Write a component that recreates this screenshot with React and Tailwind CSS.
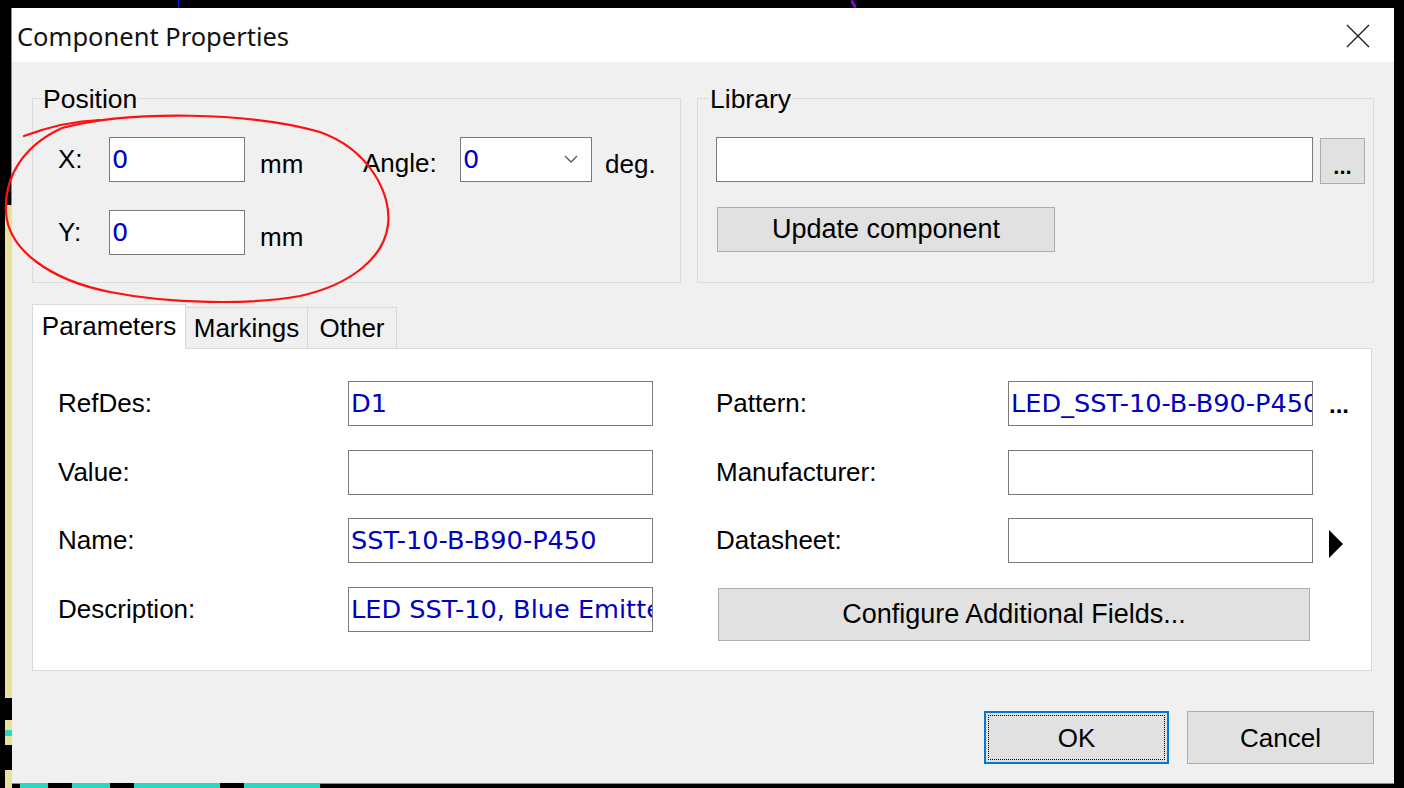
import React from "react";

function TextField({ value = "", w = "w-[305px]" }) {
  return (
    <div
      className={`${w} h-[45px] shrink-0 bg-white border border-[#7a7a7a] flex items-center pl-[2px] overflow-hidden whitespace-nowrap font-['DejaVu_Sans',Verdana,sans-serif] text-[25.6px] text-[#0000c0]`}
    >
      {value}
    </div>
  );
}

function Btn({ children, className = "" }) {
  return (
    <div
      className={`shrink-0 bg-[#e1e1e1] border border-[#adadad] flex items-center justify-center ${className}`}
    >
      {children}
    </div>
  );
}

function FieldRow({ label, value, extra }) {
  return (
    <div className="flex items-center h-[45px]">
      <div className="w-[290px] shrink-0 text-[26px]">{label}</div>
      <TextField value={value} />
      {extra}
    </div>
  );
}

export default function App() {
  return (
    <div className="relative w-[1404px] h-[788px] bg-black overflow-hidden font-['Liberation_Sans',Arial,sans-serif] text-black">
      {/* desktop background bits */}
      <div className="absolute left-[5px] top-[205px] w-[7px] h-[583px] bg-[#e6e29c]" />
      <div className="absolute left-[5px] top-[698px] w-[7px] h-[22px] bg-black" />
      <div className="absolute left-[5px] top-[730px] w-[7px] h-[6px] bg-[#2ad7c0]" />
      <div className="absolute left-[5px] top-[745px] w-[7px] h-[25px] bg-black" />
      <div className="absolute left-[20px] top-[783px] w-[300px] h-[5px] bg-[#2ad7c0]" />
      <div className="absolute left-[48px] top-[783px] w-[24px] h-[5px] bg-black" />
      <div className="absolute left-[110px] top-[783px] w-[24px] h-[5px] bg-black" />
      <div className="absolute left-[220px] top-[783px] w-[24px] h-[5px] bg-black" />
      <div className="absolute left-[178px] top-0 w-[1px] h-[8px] bg-[#1010ff]" />
      <div className="absolute left-[852px] top-0 w-[3px] h-[8px] bg-[#7a10c0] rotate-[-30deg]" />

      {/* dialog window */}
      <div className="ml-[11px] mt-[8px] w-[1383px] h-[776px] flex flex-col border-l border-b border-[#8a8a8a] bg-[#f0f0f0]">
        {/* title bar */}
        <div className="h-[54px] shrink-0 bg-white flex items-center justify-between pl-[6px] pr-[24px]">
          <span className="font-['Noto_Sans','Open_Sans',sans-serif] text-[25.5px] text-[#111] pt-[2px] -ml-px">
            Component Properties
          </span>
          <svg width="24" height="24" viewBox="0 0 24 24" className="mt-[2px]">
            <path d="M1 1 L23 23 M23 1 L1 23" stroke="#222" strokeWidth="1.4" fill="none" />
          </svg>
        </div>

        {/* body */}
        <div className="flex-1 flex flex-col px-[20px]">
          {/* groups */}
          <div className="flex mt-[36px] gap-[16px]">
            {/* Position */}
            <div className="relative w-[649px] h-[185px] border border-[#dcdcdc]">
              <span className="absolute left-[9px] top-[-13px] px-[1px] bg-[#f0f0f0] leading-none text-[26.5px]">
                Position
              </span>
              <div className="flex flex-col gap-[28px] pl-[25px] pt-[38px]">
                <div className="flex items-center h-[45px]">
                  <span className="w-[51px] text-[26px]">X:</span>
                  <TextField value="0" w="w-[136px]" />
                  <span className="ml-[15px] w-[103px] pt-[9px] text-[26px]">mm</span>
                  <span className="w-[97px] pt-[8px] text-[26px]">Angle:</span>
                  <div className="w-[132px] h-[45px] bg-white border border-[#7a7a7a] flex items-center justify-between pl-[2px] pr-[13px] font-['DejaVu_Sans',Verdana,sans-serif] text-[25.6px] text-[#0000c0]">
                    <span>0</span>
                    <svg width="14" height="9" viewBox="0 0 14 9">
                      <path d="M1 1 L7 7 L13 1" stroke="#555" strokeWidth="1.3" fill="none" />
                    </svg>
                  </div>
                  <span className="ml-[13px] pt-[9px] text-[26px]">deg.</span>
                </div>
                <div className="flex items-center h-[45px]">
                  <span className="w-[51px] text-[26px]">Y:</span>
                  <TextField value="0" w="w-[136px]" />
                  <span className="ml-[15px] pt-[9px] text-[26px]">mm</span>
                </div>
              </div>
            </div>

            {/* Library */}
            <div className="relative flex-1 h-[185px] border border-[#dcdcdc]">
              <span className="absolute left-[11px] top-[-13px] px-[1px] bg-[#f0f0f0] leading-none text-[26.5px]">
                Library
              </span>
              <div className="flex flex-col pl-[18px] pt-[38px]">
                <div className="flex items-start">
                  <TextField value="" w="w-[597px]" />
                  <Btn className="ml-[7px] mt-[1px] w-[45px] h-[46px] pt-[10px] text-[22px] font-bold">
                    ...
                  </Btn>
                </div>
                <Btn className="mt-[23px] ml-[1px] w-[338px] h-[45px] text-[27px]">Update component</Btn>
              </div>
            </div>
          </div>

          {/* tabs */}
          <div className="flex items-end h-[44px] mt-[21px]">
            <div className="relative z-10 w-[154px] h-[45px] -mb-px bg-white border border-b-0 border-[#d9d9d9] flex items-center justify-center text-[26px] pb-[2px]">
              Parameters
            </div>
            <div className="-ml-px w-[123px] h-[41px] bg-[#f0f0f0] border border-b-0 border-[#d9d9d9] flex items-center justify-center text-[26px]">
              Markings
            </div>
            <div className="-ml-px w-[90px] h-[41px] bg-[#f0f0f0] border border-b-0 border-[#d9d9d9] flex items-center justify-center text-[26px]">
              Other
            </div>
          </div>

          {/* tab panel */}
          <div className="w-[1340px] h-[323px] bg-white border border-[#d9d9d9] flex pl-[25px] pt-[32px]">
            <div className="flex flex-col gap-[23.5px]">
              <FieldRow label="RefDes:" value="D1" />
              <FieldRow label="Value:" value="" />
              <FieldRow label="Name:" value="SST-10-B-B90-P450" />
              <FieldRow label="Description:" value="LED SST-10, Blue Emitter" />
            </div>
            <div className="flex flex-col gap-[23.5px] ml-[64px]">
              <div className="flex items-center h-[45px]">
                <div className="w-[292px] shrink-0 text-[26px] -ml-px">Pattern:</div>
                <TextField value="LED_SST-10-B-B90-P450" />
                <span className="ml-[16px] pt-[2px] text-[24px] font-bold">...</span>
              </div>
              <div className="flex items-center h-[45px]">
                <div className="w-[292px] shrink-0 text-[26px] -ml-px">Manufacturer:</div>
                <TextField value="" />
              </div>
              <div className="flex items-center h-[45px]">
                <div className="w-[292px] shrink-0 text-[26px] -ml-px">Datasheet:</div>
                <TextField value="" />
                <svg width="15" height="28" viewBox="0 0 15 28" className="ml-[16px] mt-[6px]">
                  <polygon points="0,0 14,14 0,28" fill="#000" />
                </svg>
              </div>
              <Btn className="ml-[1px] mt-[1px] w-[592px] h-[53px] text-[27px]">Configure Additional Fields...</Btn>
            </div>
          </div>

          {/* bottom buttons */}
          <div className="flex justify-end mt-[40px]">
            <div className="w-[185px] h-[53px] bg-[#e1e1e1] border-2 border-[#0078d7] p-[2px] flex">
              <div className="flex-1 border border-dotted border-black flex items-center justify-center text-[26px] pt-[2px]">
                OK
              </div>
            </div>
            <Btn className="ml-[18px] w-[187px] h-[53px] text-[26px] pt-[2px]">Cancel</Btn>
          </div>
        </div>
      </div>

      {/* red hand-drawn annotation */}
      <svg
        className="absolute left-0 top-0 pointer-events-none"
        width="1404"
        height="788"
        viewBox="0 0 1404 788"
      >
        <path
          d="M24 136 C 48 127, 72 121, 100 120"
          stroke="#ff1010"
          strokeWidth="2.2"
          fill="none"
          strokeLinecap="round"
        />
        <path
          d="M62 128 C 130 110, 250 112, 320 132 C 370 150, 392 195, 388 225 C 384 258, 350 285, 300 296 C 250 305, 170 304, 110 292 C 50 280, 8 250, 6 212 C 4 175, 25 145, 62 128"
          stroke="#ff1010"
          strokeWidth="2.2"
          fill="none"
          strokeLinecap="round"
        />
      </svg>
    </div>
  );
}
